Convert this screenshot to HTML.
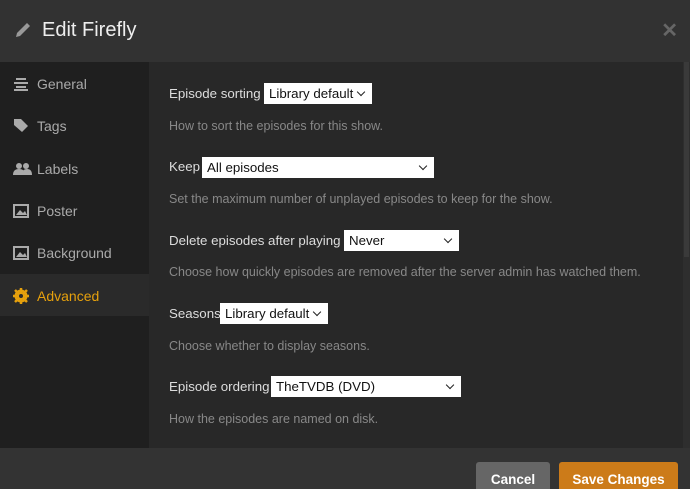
<!DOCTYPE html>
<html style="overflow:hidden"><head><style>
body{margin:0;width:690px;height:489px;overflow:hidden;background:#282828;font-family:"Liberation Sans",sans-serif;position:relative}
.hdr{position:absolute;left:0;top:0;width:690px;height:62px;background:#323232}
.hdr .t{position:absolute;left:42px;top:19px;color:#eee;font-size:20px}
.hdr .x{position:absolute;right:12px;top:18px;color:#666;font-size:20px;font-weight:bold}
.side{position:absolute;left:0;top:62px;width:149px;height:386px;background:#1f1f1f}
.it{position:absolute;left:0;width:149px;height:42px;color:#aaa;font-size:14px}
.it span{position:absolute;left:37px;top:14px}
.it svg{position:absolute;left:13px;top:14px}
.act{background:#2a2a2a;color:#e5a00d}
.lab{position:absolute;left:169px;color:#ddd;font-size:13.3px}
.sel{position:absolute;background:#fff;color:#111;font-size:13.3px;height:21px;line-height:21px;padding-left:5px;box-sizing:border-box}
.sel:after{content:"";position:absolute;right:8px;top:6px;width:5px;height:5px;border-right:1.3px solid #222;border-bottom:1.3px solid #222;transform:rotate(45deg)}
.hlp{position:absolute;left:169px;color:#888;font-size:12.5px}
.foot{position:absolute;left:0;top:448px;width:690px;height:41px;background:#333}
.btn{position:absolute;top:462px;height:27px;border-radius:3px 3px 0 0;color:#fff;font-weight:bold;font-size:13.5px;text-align:center;line-height:36px;overflow:hidden}
.sb{position:absolute;left:683px;top:62px;width:7px;height:386px;background:#2e2e2e}
.sb div{position:absolute;left:1px;top:0;width:5px;height:195px;background:#3a3a3a}
</style></head><body>
<div class="hdr"><svg style="position:absolute;left:14px;top:21px" width="18" height="18" viewBox="0 0 18 18"><path d="M2 16l1-4L13 2l3 3L6 15z" fill="#999"/></svg><div class="t">Edit Firefly</div><div class="x">✕</div></div>
<div class="side">
<div class="it" style="top:0"><svg width="16" height="16"><path d="M3 3h10M1 7h14M3 11h10M1 14h14" stroke="#aaa" stroke-width="2"/></svg><span>General</span></div>
<div class="it" style="top:42px"><svg width="18" height="16"><path d="M1 1h7l7 7-6 6-8-7z" fill="#aaa"/></svg><span>Tags</span></div>
<div class="it" style="top:85px"><svg width="20" height="16"><circle cx="6" cy="5" r="3" fill="#aaa"/><circle cx="13" cy="5" r="3" fill="#aaa"/><path d="M0 14q0-6 6-6t6 6zM9 14q0-6 5-6t5 6z" fill="#aaa"/></svg><span>Labels</span></div>
<div class="it" style="top:127px"><svg width="16" height="16"><rect x="1" y="2" width="14" height="12" fill="none" stroke="#aaa" stroke-width="2"/><path d="M3 12l4-5 3 3 2-2 2 4z" fill="#aaa"/></svg><span>Poster</span></div>
<div class="it" style="top:169px"><svg width="16" height="16"><rect x="1" y="2" width="14" height="12" fill="none" stroke="#aaa" stroke-width="2"/><path d="M3 12l4-5 3 3 2-2 2 4z" fill="#aaa"/></svg><span>Background</span></div>
<div class="it act" style="top:212px"><svg width="16" height="16"><circle cx="8" cy="8" r="5" fill="none" stroke="#e5a00d" stroke-width="3"/><path d="M8 0v16M0 8h16M2 2l12 12M14 2L2 14" stroke="#e5a00d" stroke-width="2.5"/><circle cx="8" cy="8" r="2" fill="#2a2a2a"/></svg><span>Advanced</span></div>
</div>
<div class="lab" style="top:86px">Episode sorting</div><div class="sel" style="left:264px;top:83px;width:108px">Library default</div>
<div class="hlp" style="top:119px">How to sort the episodes for this show.</div>
<div class="lab" style="top:159px">Keep</div><div class="sel" style="left:202px;top:157px;width:232px">All episodes</div>
<div class="hlp" style="top:192px">Set the maximum number of unplayed episodes to keep for the show.</div>
<div class="lab" style="top:233px">Delete episodes after playing</div><div class="sel" style="left:344px;top:230px;width:115px">Never</div>
<div class="hlp" style="top:265px">Choose how quickly episodes are removed after the server admin has watched them.</div>
<div class="lab" style="top:306px">Seasons</div><div class="sel" style="left:220px;top:303px;width:108px">Library default</div>
<div class="hlp" style="top:339px">Choose whether to display seasons.</div>
<div class="lab" style="top:379px">Episode ordering</div><div class="sel" style="left:271px;top:376px;width:190px">TheTVDB (DVD)</div>
<div class="hlp" style="top:412px">How the episodes are named on disk.</div>
<div class="sb"><div></div></div>
<div class="foot"></div>
<div class="btn" style="left:476px;width:74px;background:#666">Cancel</div>
<div class="btn" style="left:559px;width:119px;background:#cc7b19">Save Changes</div>
</body></html>
